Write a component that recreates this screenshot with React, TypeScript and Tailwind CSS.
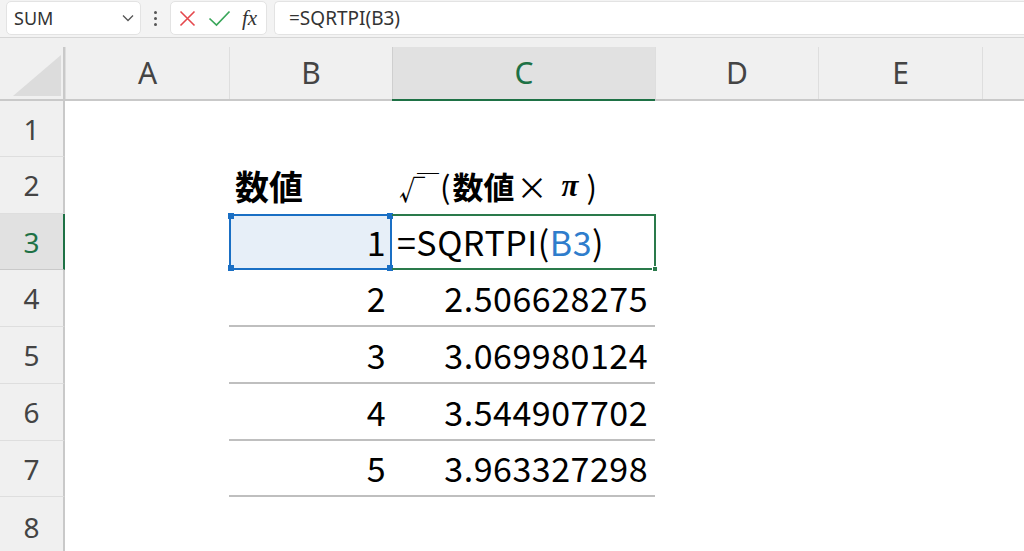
import React from "react";

const jp = "font-['Noto_Sans_CJK_JP',sans-serif]";
const ui = "font-['Noto_Sans','Noto_Sans_CJK_JP',sans-serif]";

const cols = ["A", "B", "C", "D", "E", ""];
const colWidths = ["w-[164px]", "w-[163px]", "w-[263px]", "w-[163px]", "w-[164px]", "flex-1"];
const rowHeights = ["h-[56px]", "h-[57px]", "h-[56px]", "h-[57px]", "h-[57px]", "h-[57px]", "h-[56px]", "h-[60px]"];

const data = [
  { n: "2", v: "2.506628275" },
  { n: "3", v: "3.069980124" },
  { n: "4", v: "3.544907702" },
  { n: "5", v: "3.963327298" },
];

const cellText = `text-[34px] tracking-[0.5px] text-black leading-none ${jp}`;

function Toolbar() {
  return (
    <div className={`h-[37px] shrink-0 bg-[#f3f3f3] flex items-stretch pt-[1px] pb-[2px] ${ui}`}>
      <div className="ml-[6px] w-[135px] bg-white rounded-[5px] border border-[#e3e3e3] flex items-center justify-between pl-[7px] pr-[6px]">
        <span className="text-[18px] text-[#333] leading-none">SUM</span>
        <svg width="12" height="8" viewBox="0 0 12 8" fill="none" stroke="#555" strokeWidth="1.3">
          <path d="M1 1.5 L6 6.5 L11 1.5" />
        </svg>
      </div>
      <div className="w-[29px] flex flex-col items-center justify-center gap-[3px]">
        <span className="w-[3px] h-[3px] rounded-full bg-[#555]" />
        <span className="w-[3px] h-[3px] rounded-full bg-[#555]" />
        <span className="w-[3px] h-[3px] rounded-full bg-[#555]" />
      </div>
      <div className="w-[97px] bg-white rounded-[5px] border border-[#e3e3e3] flex items-center pl-[8px] gap-[12px]">
        <svg width="17" height="17" viewBox="0 0 17 17" fill="none" stroke="#e5484d" strokeWidth="1.6">
          <path d="M1.5 1.5 L15.5 15.5 M15.5 1.5 L1.5 15.5" />
        </svg>
        <svg width="23" height="17" viewBox="0 0 23 17" fill="none" stroke="#3aa65a" strokeWidth="1.7">
          <path d="M1.5 8.5 L8.5 15 L21.5 1.5" />
        </svg>
        <span className="font-['Liberation_Serif',serif] italic text-[21px] text-[#333] leading-none -ml-[1px]">
          fx
        </span>
      </div>
      <div className="ml-[7px] flex-1 bg-white rounded-l-[5px] border border-r-0 border-[#e3e3e3] flex items-center pl-[14px]">
        <span className="text-[19px] text-[#333] leading-none">=SQRTPI(B3)</span>
      </div>
    </div>
  );
}

function ColumnHeader() {
  return (
    <div className={`h-[64px] shrink-0 flex bg-[#f0f0f0] border-t border-[#d6d6d6] ${ui}`}>
      <div className="w-[65px] shrink-0 pt-[9px] border-b-2 border-[#c9c9c9]">
        <div className="h-full border-r-2 border-[#c9c9c9] flex items-end justify-end pr-[1px] pb-[3px]">
          <svg width="49" height="41" viewBox="0 0 49 41">
            <polygon points="48,0 48,41 0,41" fill="#dcdcdc" />
          </svg>
        </div>
      </div>
      {cols.map((c, i) => {
        const selected = c === "C";
        return (
          <div key={i} className={`${colWidths[i]} shrink-0 pt-[9px] border-b-2 ${selected ? "border-[#1e7145]" : "border-[#c9c9c9]"}`}>
            <div
              className={`h-full flex items-center justify-center border-l ${
                selected ? "bg-[#e1e1e1] border-[#cfcfcf] text-[#1e7145]" : "border-[#dedede] text-[#444]"
              } text-[30px] leading-none`}
            >
              {c}
            </div>
          </div>
        );
      })}
    </div>
  );
}

function RowHeader({ n }: { n: number }) {
  const selected = n === 3;
  return (
    <div
      className={`${rowHeights[n - 1]} w-[65px] shrink-0 flex items-center justify-center border-b border-r-2 ${
        selected
          ? "bg-[#e1e1e1] border-r-[#1e7145] border-b-[#c9c9c9] text-[#1e7145]"
          : "bg-[#f0f0f0] border-r-[#c9c9c9] border-b-[#dedede] text-[#444]"
      } text-[28px] leading-none ${ui}`}
    >
      {n}
    </div>
  );
}

function Handle({ pos, color }: { pos: string; color: string }) {
  return <span className={`absolute w-[6px] h-[6px] ${pos} ${color}`} />;
}

export default function App() {
  const rows = [1, 2, 3, 4, 5, 6, 7, 8];
  return (
    <div className="w-[1024px] h-[551px] overflow-hidden bg-white flex flex-col">
      <Toolbar />
      <ColumnHeader />
      <div className="flex flex-col">
        {rows.map((r) => (
          <div key={r} className="flex shrink-0">
            <RowHeader n={r} />
            <div className="w-[164px] shrink-0" />
            {r === 2 && (
              <>
                <div className={`w-[163px] shrink-0 flex items-center pl-[6px] text-[34px] font-bold text-black leading-none ${jp}`}>
                  数値
                </div>
                <div className={`w-[263px] shrink-0 flex items-center pl-[7px] text-[31px] text-black leading-none ${jp}`}>
                  <span className="text-[26px] font-medium translate-y-[3px]">√</span>
                  <span className="text-[22px] -ml-[8px] -translate-y-[4px]">￣</span>
                  <span className="ml-[1px]">(</span>
                  <span className="font-bold ml-[2px]">数値</span>
                  <span className="ml-[2px]">×</span>
                  <span className="ml-[14px] font-bold italic font-['Liberation_Serif',serif]">π</span>
                  <span className="ml-[8px]">)</span>
                </div>
              </>
            )}
            {r === 3 && (
              <>
                <div className={`w-[163px] shrink-0 relative bg-[#e7eff8] border-2 border-[#1a6fc4] flex items-center justify-end pr-[4px] ${cellText}`}>
                  1
                  <Handle pos="-left-[3px] -top-[3px]" color="bg-[#1a6fc4]" />
                  <Handle pos="-right-[3px] -top-[3px]" color="bg-[#1a6fc4]" />
                  <Handle pos="-left-[3px] -bottom-[3px]" color="bg-[#1a6fc4]" />
                  <Handle pos="-right-[3px] -bottom-[3px]" color="bg-[#1a6fc4]" />
                </div>
                <div className={`w-[264px] shrink-0 relative border-2 border-l-0 border-[#2a7a4b] flex items-center pl-[5px] ${cellText}`}>
                  =SQRTPI(<span className="text-[#2f7dcc]">B3</span>)
                  <Handle pos="-right-[4px] -bottom-[4px]" color="bg-[#2a7a4b] border border-white" />
                </div>
              </>
            )}
            {r >= 4 && r <= 7 && (
              <>
                <div className={`w-[163px] shrink-0 border-b-2 border-[#bfbfbf] flex items-center justify-end pr-[6px] ${cellText}`}>
                  {data[r - 4].n}
                </div>
                <div className={`w-[263px] shrink-0 border-b-2 border-[#bfbfbf] flex items-center justify-end pr-[7px] ${cellText}`}>
                  {data[r - 4].v}
                </div>
              </>
            )}
          </div>
        ))}
      </div>
    </div>
  );
}
